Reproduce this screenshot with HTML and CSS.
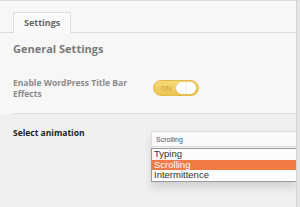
FILE: index.html
```html
<!DOCTYPE html>
<html lang="en">
<head>
    <meta charset="UTF-8">
    <title>Settings</title>
    <link rel="stylesheet" href="styles.css">
</head>
<body>
    <div class="page">
        <div class="main">
            <div class="top">
                <div class="tabs">
                    <div class="tab">Settings</div>
                </div>
                <h2 class="heading">General Settings</h2>
                <div class="row">
                    <div class="label muted">Enable WordPress Title Bar Effects</div>
                    <div class="toggle">
                        <span class="toggle-text">ON</span>
                        <span class="knob"></span>
                    </div>
                </div>
            </div>
            <div class="row select-row">
                <div class="label dark">Select animation</div>
                <div class="select-wrap">
                    <div class="select">Scrolling</div>
                    <ul class="options">
                        <li>Typing</li>
                        <li class="active">Scrolling</li>
                        <li>Intermittence</li>
                    </ul>
                </div>
            </div>
        </div>
        <div class="edge"></div>
    </div>
</body>
</html>
```

FILE: styles.css
```css
body {
    margin: 0;
    background: #f0f0f0;
    font-family: "Open Sans", "DejaVu Sans", sans-serif;
}
.page {
    display: flex;
    height: 207px;
    border-top: 1px solid #dcdcdc;
    box-sizing: border-box;
}
.main {
    flex: 1;
    min-width: 0;
}
.edge {
    width: 3px;
    background: #e4e4e4;
    border-left: 1px solid #d2d2d2;
}
.top {
    background: #f7f7f7;
}
.tabs {
    display: flex;
    padding: 11px 0 0 13px;
    border-bottom: 1px solid #dedede;
}
.tab {
    background: #fafafa;
    border: 1px solid #dedede;
    border-bottom: none;
    margin-bottom: -1px;
    padding: 0 10px;
    height: 20px;
    line-height: 20px;
    font-size: 9px;
    font-weight: bold;
    color: #666;
}
.heading {
    margin: 0;
    padding: 9px 13px 0;
    font-size: 11px;
    line-height: 14px;
    color: #7a7a7a;
}
.row {
    display: flex;
    align-items: flex-start;
    margin-left: 13px;
}
.top .row {
    align-items: center;
    margin-top: 21px;
    padding-bottom: 14px;
    border-bottom: 1px solid #dcdcdc;
}
.label {
    width: 125px;
    flex-shrink: 0;
    font-size: 8.5px;
    font-weight: bold;
    line-height: 11px;
}
.muted {
    color: #8a8a8a;
}
.dark {
    color: #222;
}
.toggle {
    margin-left: 15px;
    width: 46px;
    height: 16px;
    box-sizing: border-box;
    border-radius: 8px;
    background: linear-gradient(#f6da78, #ebc350);
    border: 1px solid #e3bb4c;
    display: flex;
    align-items: center;
    justify-content: space-between;
    padding: 0 2px 0 7px;
}
.toggle-text {
    font-size: 6.5px;
    color: #c59a3c;
    letter-spacing: 0.3px;
}
.knob {
    width: 20px;
    height: 12px;
    border-radius: 6px;
    background: linear-gradient(90deg, #fff 45%, #e6e6e6 50%, #fff 55%);
    box-shadow: 0 0 1px rgba(0, 0, 0, 0.2);
}
.select-row {
    margin-top: 13px;
}
.select-row .label {
    line-height: 12px;
}
.select-wrap {
    margin-left: 13px;
    flex: 1;
    margin-top: 4px;
    box-shadow: 0 6px 8px rgba(0, 0, 0, 0.12);
}
.select {
    height: 16px;
    line-height: 16px;
    box-sizing: border-box;
    border: 1px solid #dcdcdc;
    border-right: none;
    background: #fafafa;
    padding-left: 4px;
    font-family: "Liberation Sans", sans-serif;
    font-size: 7px;
    color: #555;
}
.options {
    list-style: none;
    margin: 1px 0 0;
    padding: 0;
    border: 1px solid #9a9a9a;
    border-right: none;
    background: #fcfcfc;
    font-family: "Liberation Sans", sans-serif;
    font-size: 9.5px;
    color: #333;
}
.options li {
    height: 10.5px;
    line-height: 10.5px;
    padding-left: 2px;
}
.options .active {
    background: #f07b45;
    color: #fff;
}
```
